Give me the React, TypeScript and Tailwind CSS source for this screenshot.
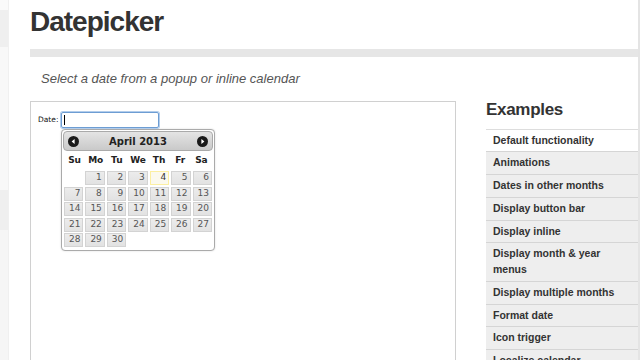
const examples = [
  { label: 'Default functionality', active: true },
  { label: 'Animations' },
  { label: 'Dates in other months' },
  { label: 'Display button bar' },
  { label: 'Display inline' },
  { label: 'Display month & year menus' },
  { label: 'Display multiple months' },
  { label: 'Format date' },
  { label: 'Icon trigger' },
  { label: 'Localize calendar' },
];

const dayNames = ['Su', 'Mo', 'Tu', 'We', 'Th', 'Fr', 'Sa'];

// April 2013 starts on a Monday
const cells: (number | null)[] = [null, ...Array.from({ length: 30 }, (_, i) => i + 1)];

function NavIcon({ dir }: { dir: 'prev' | 'next' }) {
  return (
    <svg width="11" height="11" viewBox="0 0 11 11">
      <circle cx="5.5" cy="5.5" r="5.5" fill="#1a1a1a" />
      {dir === 'prev' ? (
        <path d="M3.6 5.5 L6.6 3 L6.6 8 Z" fill="#fff" />
      ) : (
        <path d="M7.4 5.5 L4.4 3 L4.4 8 Z" fill="#fff" />
      )}
    </svg>
  );
}

function Calendar() {
  return (
    <div className="ml-[23px] w-[154px] rounded-[4px] border border-[#aaaaaa] bg-white p-[1px] shadow-[0_0_2px_rgba(0,0,0,0.15)]">
      <div className="flex h-[20px] items-center justify-between rounded-[4px] border border-[#aaaaaa] bg-gradient-to-b from-[#e4e4e4] to-[#c9c9c9] px-[4px]">
        <NavIcon dir="prev" />
        <span className="text-[10px] font-bold text-[#222] [font-family:'DejaVu_Sans',sans-serif]">April 2013</span>
        <NavIcon dir="next" />
      </div>
      <div className="grid h-[20px] grid-cols-7 items-center px-[1px]">
        {dayNames.map((d) => (
          <span key={d} className="text-center text-[9px] font-bold text-[#222] [font-family:'DejaVu_Sans',sans-serif]">
            {d}
          </span>
        ))}
      </div>
      <div className="grid grid-cols-7 gap-x-[2px] gap-y-[1.5px] px-[1px] pb-[2px]">
        {cells.map((n, i) =>
          n === null ? (
            <span key={i} />
          ) : (
            <span
              key={i}
              className={
                n === 4
                  ? 'flex h-[14px] items-center justify-end border border-[#fcefa1] bg-[#fbf9ee] pr-[2px] text-[9px] text-[#363636] [font-family:\'DejaVu_Sans\',sans-serif]'
                  : 'flex h-[14px] items-center justify-end border border-[#d3d3d3] bg-gradient-to-b from-[#ececec] to-[#e2e2e2] pr-[2px] text-[9px] text-[#555] [font-family:\'DejaVu_Sans\',sans-serif]'
              }
            >
              {n}
            </span>
          )
        )}
      </div>
    </div>
  );
}

export default function App() {
  return (
    <div className="flex h-[360px] w-[640px] overflow-hidden bg-white [font-family:'Liberation_Sans',Arial,sans-serif]">
      {/* left page strip */}
      <div className="flex w-[9px] shrink-0 flex-col border-r border-[#f0f0f0]">
        <div className="h-[10px] bg-[#fafafa]" />
        <div className="h-[37px] bg-[#efefef]" />
        <div className="h-[143px] bg-[#f8f8f8]" />
        <div className="h-[40px] bg-[#efefef]" />
        <div className="flex-1 bg-[#f6f6f6]" />
      </div>

      <div className="flex min-h-0 flex-1 flex-col pl-[21px]">
        <div className="h-[49px] shrink-0 pt-[8px]">
          <h1 className="text-[28px] font-bold leading-[28px] tracking-[-1px] text-[#333]">Datepicker</h1>
        </div>
        <div className="h-[8px] shrink-0 bg-[#e6e6e6]" />
        <p className="mt-[14px] shrink-0 pl-[11px] text-[13px] italic leading-[16px] text-[#555]">
          Select a date from a popup or inline calendar
        </p>

        <div className="mt-[14px] flex min-h-0 flex-1 overflow-hidden">
          {/* demo */}
          <div className="w-[426px] shrink-0 border border-b-0 border-[#d0d0d0] pl-[7px] pt-[10px]">
            <div className="flex items-center">
              <label className="w-[23px] text-[7.5px] text-[#111] [font-family:'DejaVu_Sans',sans-serif]">Date:</label>
              <div className="flex h-[16px] w-[98px] items-center rounded-[2px] border border-[#6d9dd3] pl-[2px] ring-1 ring-[#b3cdeb]">
                <span className="h-[10px] w-[1px] bg-black" />
              </div>
            </div>
            <div className="mt-[1px]">
              <Calendar />
            </div>
          </div>

          {/* sidebar */}
          <div className="ml-[30px] flex-1">
            <div className="h-[27.5px]">
              <h2 className="text-[17px] font-bold leading-[18px] tracking-[-0.3px] text-[#333]">Examples</h2>
            </div>
            <ul>
              {examples.map((e) => (
                <li
                  key={e.label}
                  className={
                    e.active
                      ? 'border-t border-[#dddddd] bg-white py-[3px] pl-[7px] pr-[4px] text-[10.5px] font-bold leading-[15.75px] text-[#333]'
                      : 'border-t border-[#d5d5d5] bg-[#eeeeee] py-[3px] pl-[7px] pr-[4px] text-[10.5px] font-bold leading-[15.75px] text-[#333]'
                  }
                >
                  {e.label}
                </li>
              ))}
            </ul>
          </div>
        </div>
      </div>

      {/* right edge */}
      <div className="w-[2px] shrink-0 bg-[#e4e4e4]" />
    </div>
  );
}
